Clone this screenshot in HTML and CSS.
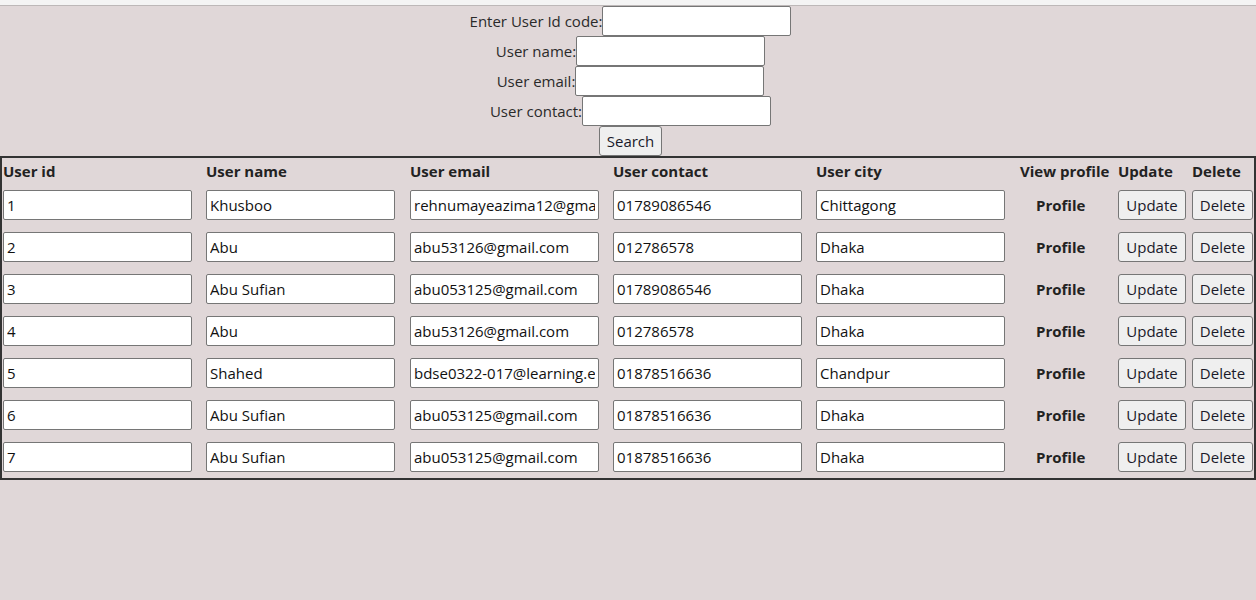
FILE: index.html
```html
<!DOCTYPE html>
<html lang="en">
<head>
<meta charset="utf-8">
<title>Users</title>
<link rel="stylesheet" href="styles.css">
</head>
<body>
<div class="topbar"></div>
<form class="search-form">
  <div class="form-row"><label class="lbl">Enter User Id code:</label><input class="field" type="text"></div>
  <div class="form-row"><label class="lbl">User name:</label><input class="field" type="text"></div>
  <div class="form-row"><label class="lbl">User email:</label><input class="field" type="text"></div>
  <div class="form-row"><label class="lbl">User contact:</label><input class="field" type="text"></div>
  <div class="form-row"><button class="btn search-btn" type="button">Search</button></div>
</form>
<table class="users">
  <thead>
    <tr>
      <th class="c-in">User id</th>
      <th class="c-in c-wide">User name</th>
      <th class="c-in">User email</th>
      <th class="c-in">User contact</th>
      <th class="c-in">User city</th>
      <th class="c-prof">View profile</th>
      <th class="c-upd">Update</th>
      <th class="c-del">Delete</th>
    </tr>
  </thead>
  <tbody>
    <tr>
      <td><input class="cell-input" value="1"></td>
      <td><input class="cell-input" value="Khusboo"></td>
      <td><input class="cell-input" value="rehnumayeazima12@gmail.com"></td>
      <td><input class="cell-input" value="01789086546"></td>
      <td><input class="cell-input" value="Chittagong"></td>
      <td class="prof">Profile</td>
      <td><button class="btn upd-btn" type="button">Update</button></td>
      <td><button class="btn del-btn" type="button">Delete</button></td>
    </tr>
    <tr>
      <td><input class="cell-input" value="2"></td>
      <td><input class="cell-input" value="Abu"></td>
      <td><input class="cell-input" value="abu53126@gmail.com"></td>
      <td><input class="cell-input" value="012786578"></td>
      <td><input class="cell-input" value="Dhaka"></td>
      <td class="prof">Profile</td>
      <td><button class="btn upd-btn" type="button">Update</button></td>
      <td><button class="btn del-btn" type="button">Delete</button></td>
    </tr>
    <tr>
      <td><input class="cell-input" value="3"></td>
      <td><input class="cell-input" value="Abu Sufian"></td>
      <td><input class="cell-input" value="abu053125@gmail.com"></td>
      <td><input class="cell-input" value="01789086546"></td>
      <td><input class="cell-input" value="Dhaka"></td>
      <td class="prof">Profile</td>
      <td><button class="btn upd-btn" type="button">Update</button></td>
      <td><button class="btn del-btn" type="button">Delete</button></td>
    </tr>
    <tr>
      <td><input class="cell-input" value="4"></td>
      <td><input class="cell-input" value="Abu"></td>
      <td><input class="cell-input" value="abu53126@gmail.com"></td>
      <td><input class="cell-input" value="012786578"></td>
      <td><input class="cell-input" value="Dhaka"></td>
      <td class="prof">Profile</td>
      <td><button class="btn upd-btn" type="button">Update</button></td>
      <td><button class="btn del-btn" type="button">Delete</button></td>
    </tr>
    <tr>
      <td><input class="cell-input" value="5"></td>
      <td><input class="cell-input" value="Shahed"></td>
      <td><input class="cell-input" value="bdse0322-017@learning.edu.bd"></td>
      <td><input class="cell-input" value="01878516636"></td>
      <td><input class="cell-input" value="Chandpur"></td>
      <td class="prof">Profile</td>
      <td><button class="btn upd-btn" type="button">Update</button></td>
      <td><button class="btn del-btn" type="button">Delete</button></td>
    </tr>
    <tr>
      <td><input class="cell-input" value="6"></td>
      <td><input class="cell-input" value="Abu Sufian"></td>
      <td><input class="cell-input" value="abu053125@gmail.com"></td>
      <td><input class="cell-input" value="01878516636"></td>
      <td><input class="cell-input" value="Dhaka"></td>
      <td class="prof">Profile</td>
      <td><button class="btn upd-btn" type="button">Update</button></td>
      <td><button class="btn del-btn" type="button">Delete</button></td>
    </tr>
    <tr>
      <td><input class="cell-input" value="7"></td>
      <td><input class="cell-input" value="Abu Sufian"></td>
      <td><input class="cell-input" value="abu053125@gmail.com"></td>
      <td><input class="cell-input" value="01878516636"></td>
      <td><input class="cell-input" value="Dhaka"></td>
      <td class="prof">Profile</td>
      <td><button class="btn upd-btn" type="button">Update</button></td>
      <td><button class="btn del-btn" type="button">Delete</button></td>
    </tr>
  </tbody>
</table>
</body>
</html>
```

FILE: styles.css
```css
html, body {
  margin: 0;
  padding: 0;
  background: #e0d7d8;
  font-family: "Open Sans", "Noto Sans", sans-serif;
  font-size: 15px;
  color: #222;
}

.topbar {
  height: 5px;
  background: #f4f4f4;
  border-bottom: 1px solid #bdb8b8;
}

.search-form {
  padding-left: 5px;
}

.form-row {
  display: flex;
  justify-content: center;
  align-items: center;
  height: 30px;
}

.lbl {
  color: #2a2a2a;
}

.field {
  box-sizing: border-box;
  width: 189px;
  height: 30px;
  margin: 0;
  border: 1px solid #767676;
  border-radius: 2px;
  background: #fff;
  font: inherit;
  padding: 1px 2px;
}

.btn {
  box-sizing: border-box;
  height: 30px;
  margin: 0;
  border: 1px solid #767676;
  border-radius: 3px;
  background: #efefef;
  font-family: inherit;
  font-size: 15px;
  color: #1a1a2a;
  padding: 0;
}

.search-btn {
  width: 63px;
}

.users {
  width: 100%;
  table-layout: fixed;
  border-collapse: separate;
  border-spacing: 0;
  border: 2px solid #333;
}

.users th {
  text-align: left;
  font-weight: 700;
  line-height: 21px;
  padding: 3px 0 2px 1px;
  white-space: nowrap;
  color: #222;
}

.users th.c-in { width: 203px; box-sizing: border-box; }
.users th.c-wide { width: 204px; }
.users th.c-prof { width: 99px; box-sizing: border-box; padding-left: 2px; }
.users th.c-upd { width: 74px; box-sizing: border-box; }
.users th.c-del { width: 63px; box-sizing: border-box; }

.users td {
  padding: 6px 0 6px 1px;
  vertical-align: middle;
}

.cell-input {
  display: block;
  box-sizing: border-box;
  width: 189px;
  height: 30px;
  margin: 0;
  border: 1px solid #767676;
  border-radius: 2px;
  background: #fff;
  font: inherit;
  color: #111;
  padding: 1px 3px;
}

.users td.prof {
  font-weight: 700;
  padding-left: 18px;
  white-space: nowrap;
}

.upd-btn {
  display: block;
  width: 68px;
}

.del-btn {
  display: block;
  width: 61px;
}
```
